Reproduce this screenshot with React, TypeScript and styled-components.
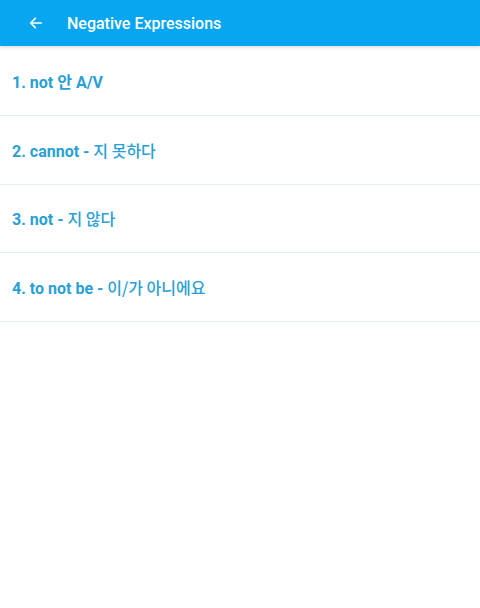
import React from 'react';
import styled, { createGlobalStyle } from 'styled-components';

const COLORS = {
  primary: '#08a6f0',
  link: '#2a9fd6',
  line: '#e3eef3',
  white: '#ffffff',
};

const GlobalStyle = createGlobalStyle`
  html, body {
    margin: 0;
    padding: 0;
    background: ${COLORS.white};
    font-family: Roboto, "Noto Sans CJK KR", sans-serif;
  }
`;

const lessons = [
  { num: 1, en: 'not', ko: '안 A/V' },
  { num: 2, en: 'cannot -', ko: '지 못하다' },
  { num: 3, en: 'not -', ko: '지 않다' },
  { num: 4, en: 'to not be -', ko: '이/가 아니에요' },
];

export default function App() {
  return (
    <>
      <GlobalStyle />
      <Page>
        <Toolbar>
          <BackButton aria-label="Back">
            <svg width="16" height="16" viewBox="0 0 24 24" fill="none">
              <path
                d="M20 12H5M11 5l-7 7 7 7"
                stroke={COLORS.white}
                strokeWidth="2.4"
                strokeLinecap="round"
                strokeLinejoin="round"
              />
            </svg>
          </BackButton>
          <Title>Negative Expressions</Title>
        </Toolbar>
        <List>
          {lessons.map((item) => (
            <Row key={item.num}>
              <RowLabel>
                {item.num}. {item.en} <Korean $plainAscii={item.num === 1}>{item.ko}</Korean>
              </RowLabel>
            </Row>
          ))}
        </List>
      </Page>
    </>
  );
}

const Page = styled.div`
  width: 480px;
  min-height: 608px;
  background: ${COLORS.white};
`;

const Toolbar = styled.div`
  display: flex;
  align-items: center;
  height: 46px;
  background: ${COLORS.primary};
  box-shadow: 0 2px 3px rgba(0, 0, 0, 0.12);
  position: relative;
  z-index: 1;
`;

const BackButton = styled.div`
  display: flex;
  align-items: center;
  justify-content: center;
  width: 16px;
  height: 16px;
  margin-left: 28px;
  margin-right: 23px;
`;

const Title = styled.div`
  color: ${COLORS.white};
  font-size: 16px;
  font-weight: 500;
`;

const List = styled.div`
  display: flex;
  flex-direction: column;
  padding-top: 1px;
`;

const Row = styled.div`
  display: flex;
  align-items: center;
  height: 67.8px;
  padding: 0 12px;
  border-bottom: 1px solid ${COLORS.line};
`;

const RowLabel = styled.div`
  color: ${COLORS.link};
  font-size: 16px;
  font-weight: 700;
`;

const Korean = styled.span<{ $plainAscii?: boolean }>`
  font-family: ${(p) => (p.$plainAscii ? 'Roboto, ' : '')}"Noto Sans CJK KR", sans-serif;
  font-weight: ${(p) => (p.$plainAscii ? 700 : 500)};
`;
